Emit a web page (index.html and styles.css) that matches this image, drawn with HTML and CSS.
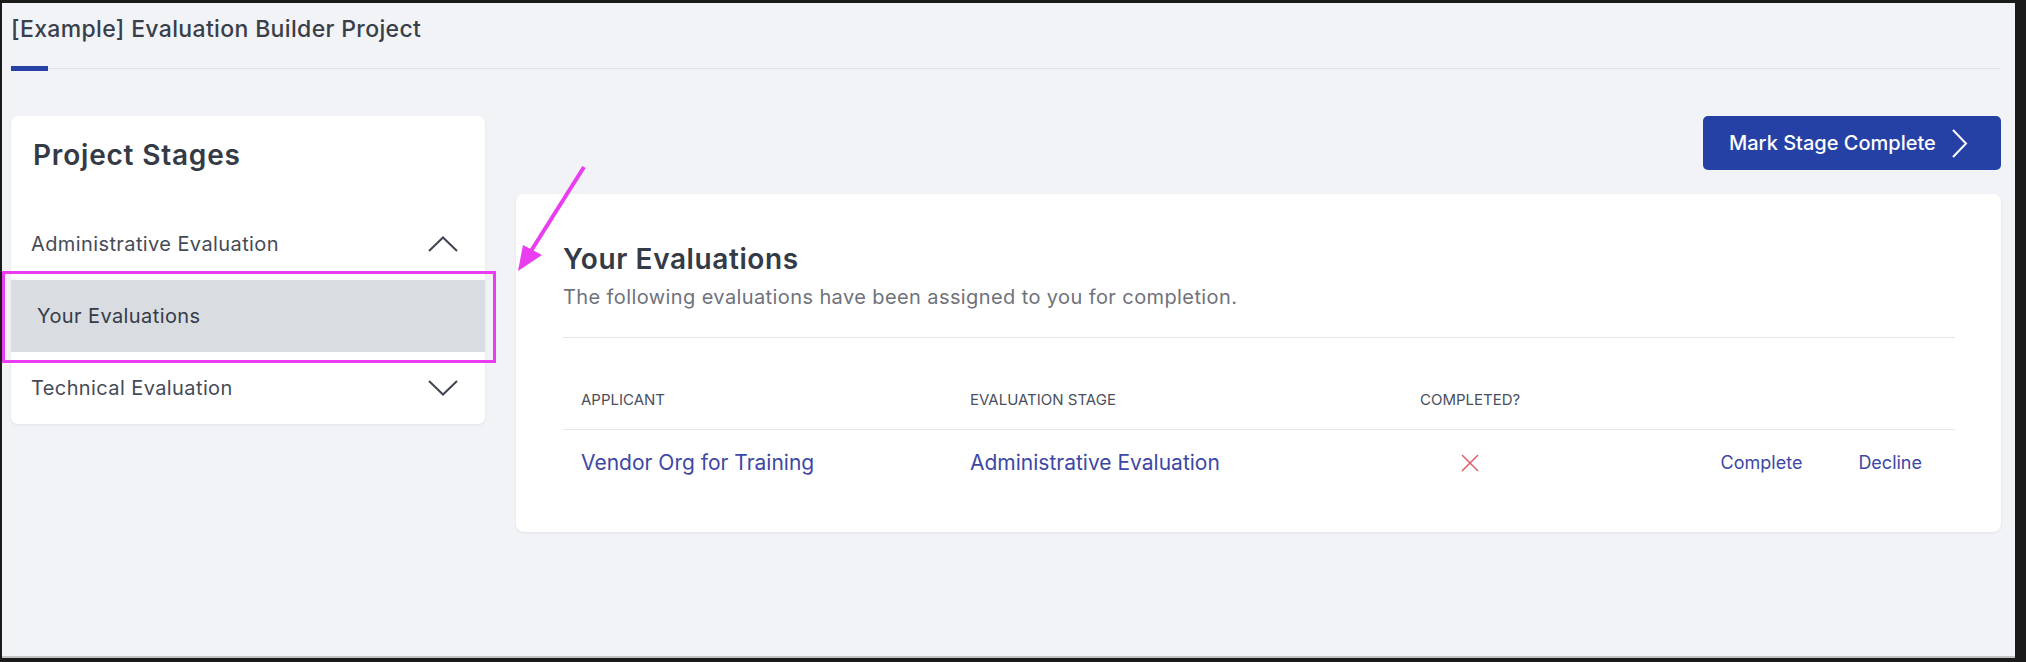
FILE: index.html
```html
<!DOCTYPE html>
<html lang="en">
<head>
<meta charset="utf-8">
<title>[Example] Evaluation Builder Project</title>
<link rel="stylesheet" href="styles.css">
</head>
<body>
<div class="frame">
  <header class="page-header">
    <h1 class="page-title">[Example] Evaluation Builder Project</h1>
    <div class="tabs"><span class="tab-active"></span><span class="tab-line"></span></div>
  </header>

  <main class="layout">
    <aside class="stages-card">
      <h2 class="stages-title">Project Stages</h2>
      <div class="stage-row">
        <span>Administrative Evaluation</span>
        <svg class="chev" width="30" height="16" viewBox="0 0 30 16"><polyline points="1,15 15,1.5 29,15" fill="none" stroke="#3f4552" stroke-width="2"/></svg>
      </div>
      <div class="stage-row sub active"><span>Your Evaluations</span></div>
      <div class="stage-row">
        <span>Technical Evaluation</span>
        <svg class="chev" width="30" height="16" viewBox="0 0 30 16"><polyline points="1,1 15,14.5 29,1" fill="none" stroke="#3f4552" stroke-width="2"/></svg>
      </div>
    </aside>

    <section class="content">
      <div class="actions">
        <button class="btn-primary" type="button">
          <span>Mark Stage Complete</span>
          <svg width="17" height="29" viewBox="0 0 17 29"><polyline points="2,1 15,14.5 2,28" fill="none" stroke="#ffffff" stroke-width="2"/></svg>
        </button>
      </div>

      <div class="eval-card">
        <h2 class="eval-title">Your Evaluations</h2>
        <p class="eval-sub">The following evaluations have been assigned to you for completion.</p>
        <div class="divider"></div>
        <table class="eval-table">
          <colgroup>
            <col class="c-app"><col class="c-stage"><col class="c-done"><col class="c-act">
          </colgroup>
          <thead>
            <tr><th>APPLICANT</th><th>EVALUATION STAGE</th><th class="center">COMPLETED?</th><th></th></tr>
          </thead>
          <tbody>
            <tr>
              <td><a class="link">Vendor Org for Training</a></td>
              <td><a class="link">Administrative Evaluation</a></td>
              <td class="center">
                <svg class="xmark" width="18" height="18" viewBox="0 0 18 18"><path d="M1 1 L17 17 M17 1 L1 17" stroke="#de5c66" stroke-width="1.5" fill="none"/></svg>
              </td>
              <td class="act-cell"><div class="act-links"><a class="link small">Complete</a><a class="link small">Decline</a></div></td>
            </tr>
          </tbody>
        </table>
      </div>
    </section>
  </main>

  <div class="annot-box"></div>
  <svg class="annot-arrow" width="2013" height="653" viewBox="0 0 2013 653">
    <line x1="582" y1="164" x2="529" y2="248" stroke="#ea3cf0" stroke-width="4"/>
    <polygon points="516,268 521,242 540,252" fill="#ea3cf0"/>
  </svg>
</div>
</body>
</html>
```

FILE: styles.css
```css
* { box-sizing: border-box; }

html, body {
  margin: 0;
  padding: 0;
  background: #1a1a1a;
  width: 2026px;
  height: 662px;
  overflow: hidden;
}

.frame {
  position: relative;
  margin: 3px 11px 0 2px;
  width: 2013px;
  height: 655px;
  background: #f2f3f7;
  border-bottom: 2px solid #c3c3c3;
  padding: 13px 14px 0 9px;
  font-family: "Inter", "Roboto", sans-serif;
  color: #3f4552;
}

.page-title {
  margin: 0;
  font-family: "Inter", sans-serif;
  font-weight: 500;
  font-size: 23px;
  line-height: 26px;
  letter-spacing: 0.35px;
  color: #383e4a;
}

.tabs {
  display: flex;
  align-items: center;
  height: 5px;
  margin-top: 24px;
}
.tab-active {
  width: 37px;
  height: 5px;
  background: #2541a6;
}
.tab-line {
  flex: 1;
  height: 1px;
  background: #e1e3e8;
}

.layout {
  display: grid;
  grid-template-columns: 474px 1fr;
  column-gap: 31px;
  margin-top: 45px;
  align-items: start;
}

.stages-card {
  background: #ffffff;
  border-radius: 7px;
  box-shadow: 0 1px 3px rgba(30, 40, 60, 0.08);
  overflow: hidden;
  padding-top: 22px;
}
.stages-title {
  margin: 0 0 36px 0;
  padding-left: 22px;
  font-family: "Inter", sans-serif;
  font-weight: 600;
  font-size: 28px;
  line-height: 34px;
  letter-spacing: 0.8px;
  color: #343a46;
}
.stage-row {
  height: 72px;
  display: flex;
  align-items: center;
  justify-content: space-between;
  padding: 0 27px 0 20px;
  font-family: "Inter", sans-serif;
  font-size: 20px;
  letter-spacing: 0.4px;
  color: #454b57;
}
.stage-row.sub { padding-left: 26px; color: #353b47; }
.stage-row.active { background: #d9dde1; }

.content {
  display: flex;
  flex-direction: column;
}
.actions {
  display: flex;
  justify-content: flex-end;
}
.btn-primary {
  display: flex;
  align-items: center;
  gap: 15px;
  height: 54px;
  width: 298px;
  padding: 0 0 0 26px;
  border: none;
  border-radius: 5px;
  background: #2541a6;
  color: #ffffff;
  font-family: "Inter", sans-serif;
  font-weight: 500;
  font-size: 20px;
}

.eval-card {
  margin-top: 24px;
  background: #ffffff;
  border-radius: 8px;
  box-shadow: 0 1px 3px rgba(30, 40, 60, 0.08);
  padding: 48px 46px 36px 47px;
}
.eval-title {
  margin: 0;
  font-family: "Inter", sans-serif;
  font-weight: 600;
  font-size: 28px;
  line-height: 34px;
  letter-spacing: 0.6px;
  color: #343a46;
}
.eval-sub {
  margin: 9px 0 0 0;
  font-size: 20px;
  line-height: 24px;
  letter-spacing: 0.4px;
  color: #6f727b;
}
.divider {
  margin-top: 28px;
  height: 1px;
  background: #e4e6ea;
}

.eval-table {
  width: 100%;
  table-layout: fixed;
  border-collapse: collapse;
  margin-top: 53px;
}
.c-app { width: 389px; }
.c-stage { width: 450px; }
.c-done { width: 136px; }
.eval-table th {
  text-align: left;
  font-weight: 400;
  font-size: 15px;
  line-height: 18px;
  color: #4a4f5c;
  padding: 0 18px 20px 18px;
  border-bottom: 1px solid #e6e8ec;
}
.eval-table td {
  padding: 0 18px;
  height: 66px;
  vertical-align: middle;
}
.eval-table .center { text-align: center; }
.xmark { display: block; margin: 0 auto; }

.link {
  color: #3c48a4;
  font-size: 21px;
  text-decoration: none;
}
.link.small { font-size: 18px; }
.act-links {
  display: flex;
  justify-content: flex-end;
  gap: 56px;
  padding-right: 15px;
}

.annot-box {
  position: absolute;
  left: 0;
  top: 268px;
  width: 494px;
  height: 92px;
  border: 3px solid #ea3cf0;
}
.annot-arrow {
  position: absolute;
  left: 0;
  top: 0;
  pointer-events: none;
}
```
